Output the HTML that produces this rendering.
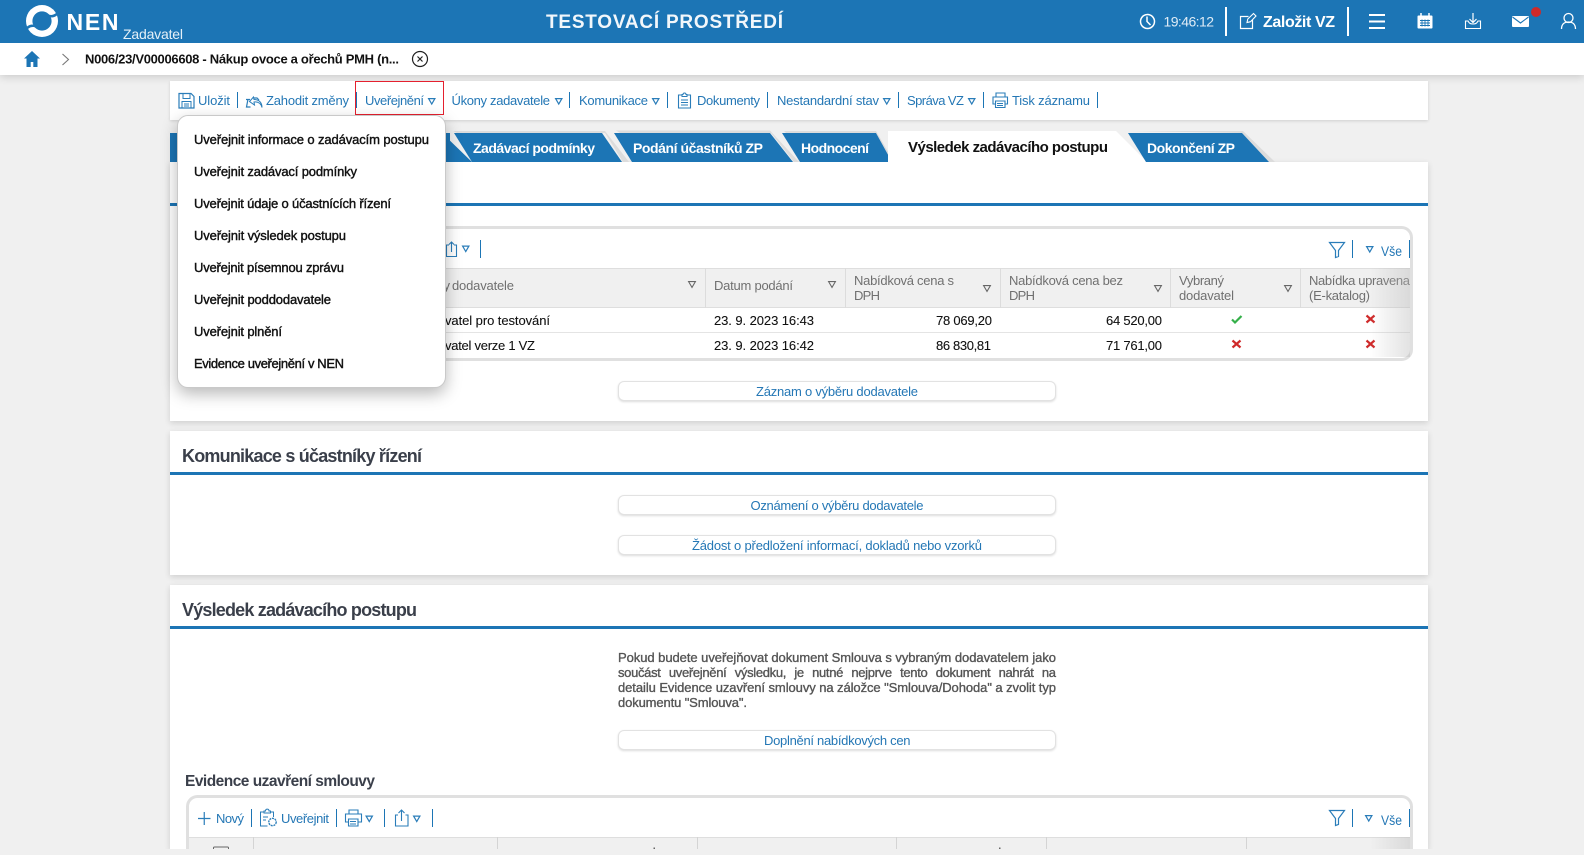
<!DOCTYPE html>
<html lang="cs">
<head>
<meta charset="utf-8">
<title>NEN Zadavatel</title>
<style>
html,body{margin:0;padding:0;width:1584px;height:855px;overflow:hidden;background:#f0f0f0;font-family:"Liberation Sans",sans-serif}
.abs{position:absolute}
.hdr{left:0;top:0;width:1584px;height:43px;background:#1c75b5}
.crumb{left:0;top:43px;width:1584px;height:32px;background:#fff;box-shadow:0 2px 8px rgba(0,0,0,.16)}
.bar{left:170px;top:81px;width:1258px;height:39px;background:#fff;box-shadow:0 1px 3px rgba(0,0,0,.14)}
.sec{left:170px;width:1258px;background:#fff;box-shadow:0 2px 6px rgba(0,0,0,.14)}
.btn{left:618px;width:436px;height:18px;background:#fff;border:1px solid #e2e2e2;border-radius:6px;box-shadow:0 1px 2px rgba(0,0,0,.14)}
.menu{left:177px;top:115px;width:267px;height:271px;background:#fff;border:1px solid #c9c9c9;border-radius:11px;box-shadow:0 6px 16px rgba(0,0,0,.28)}
svg{position:absolute;left:0;top:0}
text{font-family:"Liberation Sans",sans-serif}
.l{font-size:13px;fill:#2477b5}
.m{font-size:13px;fill:#111;stroke:#111;stroke-width:.4px}
.h{font-size:13px;fill:#707070}
.b{font-size:13px;fill:#111;stroke:#111;stroke-width:.1px}
.tab{font-size:14px;font-weight:bold;fill:#fff}
.ttl{font-size:18px;font-weight:bold;fill:#3a3f4a}
.p{font-size:13px;fill:#555;stroke:#555;stroke-width:.35px}
.ic{fill:none;stroke:#2a7db9;stroke-width:1.2}
.wi{fill:none;stroke:#fff;stroke-width:1.5}
</style>
</head>
<body>
<div class="abs crumb"></div>
<div class="abs hdr"></div>
<div class="abs bar"></div>
<div class="abs sec" style="top:162px;height:259px"></div>
<div class="abs sec" style="top:431px;height:144px"></div>
<div class="abs sec" style="top:585px;height:264px"></div>

<div class="abs btn" style="top:381px"></div>
<div class="abs btn" style="top:495px"></div>
<div class="abs btn" style="top:535px"></div>
<div class="abs btn" style="top:730px"></div>

<svg width="1584" height="855" viewBox="0 0 1584 855">
<defs>
<path id="tri" d="M.6.6h6.3L3.75 6z" fill="none" stroke="#2a7db9" stroke-width="1.2"/>
<path id="trg" d="M.6.6h6.8L4 6.4z" fill="none" stroke="#666" stroke-width="1.1"/>
<path id="x" d="M-4-3.5L4 3.5M4-3.5L-4 3.5" fill="none" stroke="#cf2a2a" stroke-width="2.2"/>
<linearGradient id="fade" x1="0" x2="1" y1="0" y2="0"><stop offset="0" stop-color="#bbb" stop-opacity="0"/><stop offset="1" stop-color="#bbb" stop-opacity=".42"/></linearGradient>
</defs>

<!-- logo -->
<circle cx="42" cy="21" r="16" fill="#fff"/>
<circle cx="42" cy="21" r="9.6" fill="#1c75b5"/>
<path d="M59 10C55 15 51 16 48 14L49.500 17C53 18.500 57 16.500 59 13Z" fill="#1c75b5"/>
<path d="M25 32C29 27 33 26 36 28L34.500 25C31 23.500 27 25.500 25 29Z" fill="#1c75b5"/>
<text x="66.500" y="30" font-size="23" font-weight="bold" fill="#fff" textLength="52">NEN</text>
<text x="123" y="39" font-size="14" fill="#e4f0f8" textLength="60">Zadavatel</text>
<text x="546" y="28" font-size="19" font-weight="bold" fill="#f2f7fb" textLength="237">TESTOVACÍ PROSTŘEDÍ</text>

<!-- header right -->
<circle cx="1147.5" cy="21.5" r="7" class="wi" stroke-width="1.4"/>
<path d="M1147 16.5v5l3.5 3.5" class="wi" stroke-width="1.3"/>
<text x="1163.5" y="26.5" font-size="14" fill="#dfecf6" textLength="50.5">19:46:12</text>
<rect x="1225" y="7" width="2" height="29" fill="#fff"/>
<path d="M1252.500 20v8.500h-12v-12h8" class="wi" style="stroke-width:1.200"/>
<path d="M1247 22.500l.8-3.500 5.700-5.500 2.500 2.500-5.500 5.700z" class="wi" style="stroke-width:1.100"/>
<text x="1263" y="27" font-size="16" font-weight="bold" fill="#fff" textLength="72">Založit VZ</text>
<rect x="1347" y="7" width="2" height="29" fill="#fff"/>
<path d="M1369 15h16M1369 21.500h16M1369 28h16" stroke="#fff" stroke-width="2" fill="none"/>
<rect x="1417.500" y="15.500" width="15" height="13" rx="1" fill="#fff"/>
<path d="M1421 13v4M1429 13v4" stroke="#fff" stroke-width="1.500"/>
<path d="M1420 20.500h10M1420 23h10M1420 25.500h10M1422 19.500v7M1425 19.500v7M1428 19.500v7" stroke="#1c75b5" stroke-width=".9"/>
<path d="M1473 13v9M1469.500 19l3.500 3.500 3.500-3.500" class="wi" style="stroke-width:1.200"/>
<path d="M1468 21h-2.500v7.500h15V21H1478c-1 2-2 3-5 3s-4-1-5-3z" class="wi" style="stroke-width:1.100"/>
<rect x="1512" y="16" width="17" height="11" rx="1" fill="#fff"/>
<path d="M1512.500 17l8 6 8-6" fill="none" stroke="#1c75b5" stroke-width="1.100"/>
<circle cx="1536" cy="12" r="5" fill="#cf2a2a"/>
<circle cx="1568.500" cy="18" r="4.500" class="wi" style="stroke-width:1.300"/>
<path d="M1561.500 29c0-5 3-7 7-7s7 2 7 7" class="wi" style="stroke-width:1.300"/>

<!-- breadcrumb -->
<path d="M32 51L24 58.500h2.500V67h4.200v-5h2.600v5h4.200v-8.500H40z" fill="#1c75b5"/>
<path d="M62.500 54l6 5.500-6 5.500" fill="none" stroke="#777" stroke-width="1.100"/>
<text x="85" y="63.500" font-size="13" font-weight="bold" fill="#111" textLength="314">N006/23/V00006608 - Nákup ovoce a ořechů PMH (n...</text>
<circle cx="420" cy="59" r="7.500" fill="none" stroke="#222" stroke-width="1.200"/>
<path d="M417.500 56.500l5 5M422.500 56.500l-5 5" stroke="#222" stroke-width="1.200"/>

<!-- toolbar -->
<path d="M179 93.500h12l3 3v11.500h-15z" class="ic"/>
<path d="M183 93.500v5h7v-5M182 108v-6.500h9v6.500M184 104h5M184 106h5" class="ic" style="stroke-width:1"/>
<text x="198" y="105" class="l" textLength="32">Uložit</text>
<rect x="237" y="92" width="1" height="16" fill="#1c75b5"/>
<path d="M248 99l-1.500 8h4M254 98h3l2 2M246 99.500h4" class="ic"/>
<path d="M262 107.500c-1-4-4-6-8-5.500l.5 3-5-3.500 4-4.500.5 2.500c5 0 8 3 8 8z" class="ic" style="stroke-width:1"/>
<text x="266" y="105" class="l" textLength="83">Zahodit změny</text>
<rect x="356" y="92" width="1" height="16" fill="#1c75b5"/>
<rect x="355.500" y="81.500" width="88" height="33" fill="none" stroke="#e5202e" stroke-width="1"/>
<text x="365" y="105" class="l" textLength="59">Uveřejnění</text>
<use href="#tri" x="428" y="98"/>
<text x="451.500" y="105" class="l" textLength="98.500">Úkony zadavatele</text>
<use href="#tri" x="555" y="98"/>
<rect x="569" y="92" width="1" height="16" fill="#1c75b5"/>
<text x="579" y="105" class="l" textLength="69">Komunikace</text>
<use href="#tri" x="652" y="98"/>
<rect x="667" y="92" width="1" height="16" fill="#1c75b5"/>
<path d="M682 95h-3.500v13h12V95H687" class="ic" style="stroke-width:1.100"/>
<path d="M682 96.500v-2h1c0-2 3-2 3 0h1v2zM681 100h7M681 102.500h7M681 105h7" class="ic" style="stroke-width:1"/>
<text x="697" y="105" class="l" textLength="63">Dokumenty</text>
<rect x="767" y="92" width="1" height="16" fill="#1c75b5"/>
<text x="777" y="105" class="l" textLength="102">Nestandardní stav</text>
<use href="#tri" x="883" y="98"/>
<rect x="898" y="92" width="1" height="16" fill="#1c75b5"/>
<text x="907" y="105" class="l" textLength="57">Správa VZ</text>
<use href="#tri" x="968" y="98"/>
<rect x="983" y="92" width="1" height="16" fill="#1c75b5"/>
<path d="M996 97v-4h9v4M996 104h-3v-7h14.500v7h-3M995.500 101h9.500v6.500h-9.500zM997 103.500h6M997 105.500h6" class="ic" style="stroke-width:1.100"/>
<text x="1012" y="105" class="l" textLength="78">Tisk záznamu</text>
<rect x="1097" y="92" width="1" height="16" fill="#1c75b5"/>

<!-- tabs -->
<rect x="170" y="133" width="280" height="29" fill="#1c75b5"/>
<path d="M440 131L472 162H450L440 133z" fill="#1c75b5"/>
<path d="M605 131h-152l4 2h148l18 29h6z" fill="#dcdcdc"/>
<path d="M454 133H602L622 162H472z" fill="#1c75b5"/>
<path d="M770 130.500H616l4 2.500h151l23 29h5z" fill="#dcdcdc"/>
<path d="M614 133H770L793 162H632z" fill="#1c75b5"/>
<path d="M876 131H784l2 2h90l14 29h4z" fill="#dcdcdc"/>
<path d="M782 133H876L892 162H800z" fill="#1c75b5"/>
<path d="M888 131H1116L1147 162H888z" fill="#fff"/>
<path d="M1128 131H1243L1275 162H1268L1242 133z" fill="#dcdcdc"/>
<path d="M1128 133H1242L1269 162H1146z" fill="#1c75b5"/>
<text x="473" y="153" class="tab" textLength="122">Zadávací podmínky</text>
<text x="633" y="153" class="tab" textLength="130">Podání účastníků ZP</text>
<text x="801" y="153" class="tab" textLength="68">Hodnocení</text>
<text x="908" y="152" font-size="15" font-weight="bold" fill="#111" textLength="200">Výsledek zadávacího postupu</text>
<text x="1147" y="153" class="tab" textLength="88">Dokončení ZP</text>

<rect x="170" y="203" width="1258" height="3" fill="#1c75b5"/>

<!-- first table -->
<rect x="187.500" y="227.500" width="1224" height="132" rx="10" fill="#fff" stroke="#e0e0e0" stroke-width="3"/>
<path d="M449 245h-2.500v11.500h10V245H454M451.500 252v-10M449 244.500l2.500-2.500 2.500 2.500" class="ic" style="stroke-width:1.100"/>
<use href="#tri" x="462" y="245.500"/>
<rect x="480" y="240" width="1" height="18" fill="#1c75b5"/>
<path d="M1329.500 242.500h15l-6 8v6l-3 1v-7z" class="ic"/>
<rect x="1352" y="240" width="1" height="18" fill="#1c75b5"/>
<use href="#tri" x="1366" y="246"/>
<text x="1381" y="256" class="l" style="font-size:14px" textLength="21" lengthAdjust="spacingAndGlyphs">Vše</text>
<rect x="1409" y="240" width="1" height="18" fill="#1c75b5"/>

<rect x="189" y="268" width="1221" height="40" fill="#f0f0f0"/>
<path d="M189 268.500h1221M189 307.500h1221" stroke="#dedede"/>
<path d="M189 332.500h1221" stroke="#e4e4e4"/>
<path d="M705.500 268v40M845.500 268v40M1000.500 268v40M1170.500 268v40M1300.500 268v40" stroke="#dcdcdc"/>

<text x="450" y="290" class="h" text-anchor="end">Název firmy</text>
<text x="452" y="290" class="h" textLength="62">dodavatele</text>
<use href="#trg" x="688" y="281"/>
<text x="714" y="290" class="h" textLength="79">Datum podání</text>
<use href="#trg" x="828" y="281"/>
<text x="854" y="285" class="h" textLength="100">Nabídková cena s</text>
<text x="854" y="300" class="h" textLength="26">DPH</text>
<use href="#trg" x="983" y="285"/>
<text x="1009" y="285" class="h" textLength="114">Nabídková cena bez</text>
<text x="1009" y="300" class="h" textLength="26">DPH</text>
<use href="#trg" x="1154" y="285"/>
<text x="1179" y="285" class="h" textLength="45">Vybraný</text>
<text x="1179" y="300" class="h" textLength="55">dodavatel</text>
<use href="#trg" x="1284" y="285"/>
<text x="1309" y="285" class="h" textLength="101">Nabídka upravena</text>
<text x="1309" y="300" class="h" textLength="61">(E-katalog)</text>

<text x="445" y="325" class="b" text-anchor="end">Doda</text>
<text x="445" y="325" class="b" textLength="105">vatel pro testování</text>
<text x="445" y="350" class="b" text-anchor="end">Doda</text>
<text x="445" y="350" class="b" textLength="90">vatel verze 1 VZ</text>
<text x="714" y="325" class="b" textLength="100">23. 9. 2023 16:43</text>
<text x="714" y="350" class="b" textLength="100">23. 9. 2023 16:42</text>
<text x="936" y="325" class="b" textLength="56">78 069,20</text>
<text x="936" y="350" class="b" textLength="55">86 830,81</text>
<text x="1106" y="325" class="b" textLength="56">64 520,00</text>
<text x="1106" y="350" class="b" textLength="56">71 761,00</text>
<path d="M1232 319.500l3 3 6.500-6.500" fill="none" stroke="#35b04a" stroke-width="2.200"/>
<use href="#x" x="1236.500" y="344"/>
<use href="#x" x="1370.500" y="319"/>
<use href="#x" x="1370.500" y="344"/>
<rect x="1370" y="268" width="40" height="89" fill="url(#fade)"/>

<!-- buttons -->
<text x="756" y="396" class="l" textLength="162">Záznam o výběru dodavatele</text>
<text x="750.500" y="510" class="l" textLength="173">Oznámení o výběru dodavatele</text>
<text x="692" y="550" class="l" textLength="290">Žádost o předložení informací, dokladů nebo vzorků</text>
<text x="764" y="745" class="l" textLength="146.500">Doplnění nabídkových cen</text>

<!-- section 2 -->
<text x="182" y="462" class="ttl" textLength="240">Komunikace s účastníky řízení</text>
<rect x="170" y="472" width="1258" height="3" fill="#1c75b5"/>

<!-- section 3 -->
<text x="182" y="616" class="ttl" textLength="235">Výsledek zadávacího postupu</text>
<rect x="170" y="626" width="1258" height="3" fill="#1c75b5"/>

<text x="618" y="662" class="p" textLength="438">Pokud budete uveřejňovat dokument Smlouva s vybraným dodavatelem jako</text>
<text x="618" y="677" class="p" textLength="438" word-spacing="5">součást uveřejnění výsledku, je nutné nejprve tento dokument nahrát na</text>
<text x="618" y="692" class="p" textLength="438">detailu Evidence uzavření smlouvy na záložce "Smlouva/Dohoda" a zvolit typ</text>
<text x="618" y="707" class="p" textLength="129">dokumentu "Smlouva".</text>

<text x="185" y="786" font-size="15.500" font-weight="bold" fill="#3a3f4a" textLength="190">Evidence uzavření smlouvy</text>

<!-- second table -->
<rect x="187.500" y="796.500" width="1224" height="80" rx="10" fill="#fff" stroke="#e0e0e0" stroke-width="3"/>
<path d="M198 818.500h12.500M204.250 812v13" class="ic"/>
<text x="216" y="823" class="l" textLength="28">Nový</text>
<rect x="251" y="809" width="1" height="18" fill="#1c75b5"/>
<path d="M264 812h-3.500v14h7M271 812h2.500v5M264 813v-2h1.500c0-2.500 3.500-2.500 3.500 0h1.500v2zM263 817h5M263 820h3" class="ic" style="stroke-width:1"/>
<circle cx="272.500" cy="822" r="3.700" class="ic" style="stroke-width:1.400" stroke-dasharray="2 .8"/>
<text x="281" y="823" class="l" textLength="48">Uveřejnit</text>
<rect x="336" y="809" width="1" height="18" fill="#1c75b5"/>
<path d="M349 814v-4h9v4M349 822h-3.500v-8h16v8h-3M348.500 819h9.500v7h-9.500zM350 821.500h6M350 824h6" class="ic" style="stroke-width:1.100"/>
<use href="#tri" x="365.500" y="815.500"/>
<rect x="384" y="809" width="1" height="18" fill="#1c75b5"/>
<path d="M398 815h-2.500v11h12.500v-11h-2.500M401.500 821v-11M398.500 813l3-3 3 3" class="ic" style="stroke-width:1.100"/>
<use href="#tri" x="413" y="815.500"/>
<rect x="432" y="809" width="1" height="18" fill="#1c75b5"/>
<path d="M1329.500 810.500h15l-6 8v6l-3 1v-7z" class="ic"/>
<rect x="1352" y="809" width="1" height="18" fill="#1c75b5"/>
<use href="#tri" x="1365" y="815"/>
<text x="1381" y="825" class="l" style="font-size:14px" textLength="21" lengthAdjust="spacingAndGlyphs">Vše</text>
<rect x="1409" y="809" width="1" height="18" fill="#1c75b5"/>

<rect x="189" y="837" width="1221" height="12" fill="#f0f0f0"/>
<path d="M189 837.500h1221" stroke="#dedede"/>
<path d="M253.500 837v12M497.500 837v12M697.500 837v12M896.500 837v12M1046.500 837v12M1246.500 837v12" stroke="#d4d4d4"/>
<rect x="213.500" y="847" width="15" height="10" rx="1" fill="none" stroke="#666"/>
<rect x="653.500" y="847.500" width="1.500" height="1.500" fill="#666"/>
<rect x="999" y="847.500" width="1.500" height="1.500" fill="#666"/>
<rect x="1370" y="837" width="40" height="12" fill="url(#fade)"/>

<rect x="0" y="849" width="1584" height="6" fill="#f0f0f0"/>
</svg>

<div class="abs menu">
<svg width="267" height="272" viewBox="178 114 267 272" style="left:0;top:-2px">
<text x="194" y="144" class="m" textLength="235">Uveřejnit informace o zadávacím postupu</text>
<text x="194" y="176" class="m" textLength="163">Uveřejnit zadávací podmínky</text>
<text x="194" y="208" class="m" textLength="197">Uveřejnit údaje o účastnících řízení</text>
<text x="194" y="240" class="m" textLength="152">Uveřejnit výsledek postupu</text>
<text x="194" y="272" class="m" textLength="150">Uveřejnit písemnou zprávu</text>
<text x="194" y="304" class="m" textLength="137">Uveřejnit poddodavatele</text>
<text x="194" y="336" class="m" textLength="88">Uveřejnit plnění</text>
<text x="194" y="368" class="m" textLength="150">Evidence uveřejnění v NEN</text>
</svg>
</div>
</body>
</html>
